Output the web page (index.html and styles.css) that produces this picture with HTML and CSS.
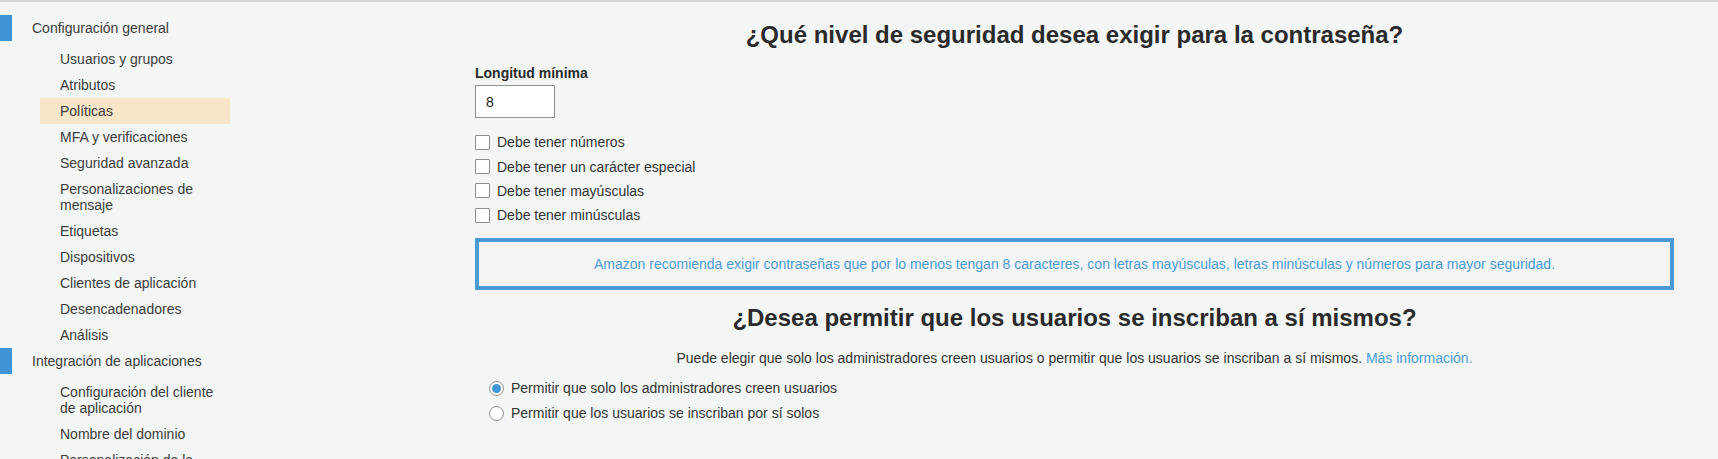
FILE: index.html
```html
<!DOCTYPE html>
<html lang="es">
<head>
<meta charset="utf-8">
<title>Políticas</title>
<link rel="stylesheet" href="styles.css">
</head>
<body>
<div class="topline"></div>
<div class="layout">
  <nav class="sidebar">
    <div class="section">
      <div class="section-head"><span class="marker"></span><span class="section-title">Configuración general</span></div>
      <ul class="items">
        <li class="item">Usuarios y grupos</li>
        <li class="item">Atributos</li>
        <li class="item active">Políticas</li>
        <li class="item">MFA y verificaciones</li>
        <li class="item">Seguridad avanzada</li>
        <li class="item">Personalizaciones de mensaje</li>
        <li class="item">Etiquetas</li>
        <li class="item">Dispositivos</li>
        <li class="item">Clientes de aplicación</li>
        <li class="item">Desencadenadores</li>
        <li class="item">Análisis</li>
      </ul>
    </div>
    <div class="section">
      <div class="section-head"><span class="marker"></span><span class="section-title">Integración de aplicaciones</span></div>
      <ul class="items">
        <li class="item">Configuración del cliente de aplicación</li>
        <li class="item">Nombre del dominio</li>
        <li class="item">Personalización de la interfaz de usuario</li>
      </ul>
    </div>
  </nav>
  <main class="content">
    <h1 class="title">¿Qué nivel de seguridad desea exigir para la contraseña?</h1>
    <label class="field-label" for="minlen">Longitud mínima</label>
    <input class="num-input" id="minlen" type="text" value="8">
    <ul class="checks">
      <li class="check-row"><span class="checkbox"></span><span>Debe tener números</span></li>
      <li class="check-row"><span class="checkbox"></span><span>Debe tener un carácter especial</span></li>
      <li class="check-row"><span class="checkbox"></span><span>Debe tener mayúsculas</span></li>
      <li class="check-row"><span class="checkbox"></span><span>Debe tener minúsculas</span></li>
    </ul>
    <div class="notice">Amazon recomienda exigir contraseñas que por lo menos tengan 8 caracteres, con letras mayúsculas, letras minúsculas y números para mayor seguridad.</div>
    <h1 class="title title-2">¿Desea permitir que los usuarios se inscriban a sí mismos?</h1>
    <p class="desc">Puede elegir que solo los administradores creen usuarios o permitir que los usuarios se inscriban a sí mismos. <a class="link" href="#">Más información.</a></p>
    <ul class="radios">
      <li class="radio-row"><span class="radio checked"></span><span>Permitir que solo los administradores creen usuarios</span></li>
      <li class="radio-row"><span class="radio"></span><span>Permitir que los usuarios se inscriban por sí solos</span></li>
    </ul>
  </main>
</div>
</body>
</html>
```
FILE: styles.css
```css
* { box-sizing: border-box; }
html, body {
  margin: 0;
  padding: 0;
  background: #f4f6f5;
  font-family: "Liberation Sans", Arial, sans-serif;
  font-size: 14px;
  color: #333;
  overflow: hidden;
  height: 459px;
}
.topline {
  height: 2px;
  background: #d3d5d4;
}
.layout {
  display: grid;
  grid-template-columns: 475px 1fr;
}
.sidebar {
  padding-top: 13px;
}
.section-head {
  display: flex;
  align-items: center;
  height: 26px;
  margin-bottom: 5px;
}
.marker {
  width: 12px;
  height: 26px;
  background: #3f95d6;
}
.section-title {
  margin-left: 20px;
  color: #3c3c3c;
  line-height: 26px;
}
.items {
  list-style: none;
  margin: 0;
  padding: 0;
}
.item {
  margin-left: 40px;
  width: 190px;
  padding: 5px 15px 5px 20px;
  line-height: 16px;
  color: #3c3c3c;
}
.item.active {
  background: #f9e5c7;
}
.content {
  padding: 20px 44px 0 0;
  display: flex;
  flex-direction: column;
  align-items: stretch;
}
.title {
  margin: 0;
  font-size: 24px;
  line-height: 26px;
  font-weight: bold;
  text-align: center;
  color: #2a2a2a;
}
.field-label {
  margin-top: 16px;
  font-weight: bold;
  line-height: 18px;
  color: #2a2a2a;
}
.num-input {
  margin-top: 3px;
  width: 80px;
  height: 33px;
  border: 1px solid #8e9191;
  background: #fff;
  padding: 0 0 0 10px;
  font-family: inherit;
  font-size: 14px;
  color: #222;
  outline: none;
}
.checks, .radios {
  list-style: none;
  margin: 0;
  padding: 0;
}
.checks {
  margin-top: 12px;
}
.check-row {
  display: flex;
  align-items: center;
  height: 24.4px;
  gap: 7px;
}
.checkbox {
  width: 15px;
  height: 15px;
  border: 1px solid #8b8e8e;
  border-radius: 1px;
  background: #fff;
  flex: none;
}
.notice {
  margin-top: 10px;
  border: 4px solid #4a9bd6;
  padding: 13px 10px;
  line-height: 18px;
  text-align: center;
  color: #4c9bd8;
}
.title-2 {
  margin-top: 15px;
}
.desc {
  margin: 18px 0 0;
  line-height: 18px;
  text-align: center;
  color: #333;
}
.link {
  color: #4c9bd8;
  text-decoration: none;
}
.radios {
  margin-top: 9px;
  padding-left: 14px;
}
.radio-row {
  display: flex;
  align-items: center;
  height: 25px;
  gap: 7px;
}
.radio {
  width: 15px;
  height: 15px;
  border-radius: 50%;
  border: 1px solid #8b8e8e;
  background: #fff;
  flex: none;
  position: relative;
}
.radio.checked::after {
  content: "";
  position: absolute;
  left: 2px;
  top: 2px;
  width: 9px;
  height: 9px;
  border-radius: 50%;
  background: #3f95d6;
}
```
